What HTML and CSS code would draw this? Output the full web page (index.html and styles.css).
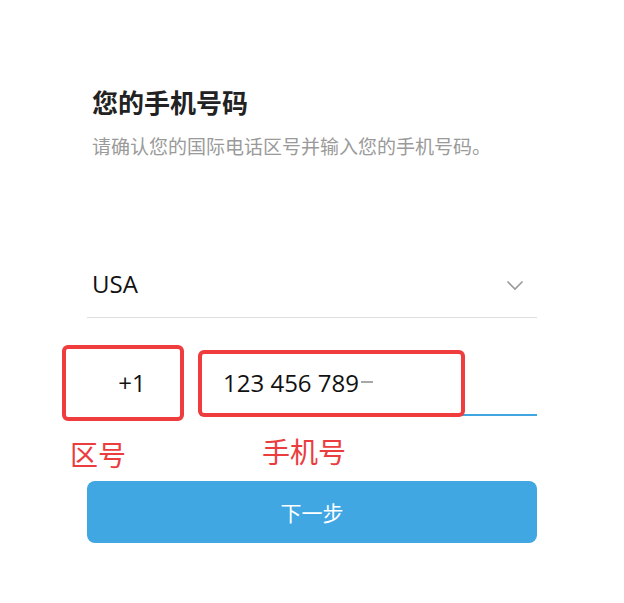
FILE: index.html
```html
<!DOCTYPE html>
<html lang="zh-CN">
<head>
<meta charset="utf-8">
<title>您的手机号码</title>
<link rel="stylesheet" href="styles.css">
</head>
<body>
<div class="page">
  <div class="form">
    <h1 class="title">您的手机号码</h1>
    <p class="subtitle">请确认您的国际电话区号并输入您的手机号码。</p>
    <div class="select-row">
      <span class="country">USA</span>
      <svg class="chevron" width="18" height="11" viewBox="0 0 18 11"><path d="M1.5 1.5 L9 9 L16.5 1.5" fill="none" stroke="#9b9b9b" stroke-width="1.6"/></svg>
    </div>
    <div class="phone-row">
      <div class="code-input">+1</div>
      <div class="number-input">123 456 789<span class="caret"></span></div>
    </div>
    <button class="next-btn">下一步</button>
  </div>
  <div class="mark mark-code"></div>
  <div class="mark mark-number"></div>
  <div class="label label-code">区号</div>
  <div class="label label-number">手机号</div>
</div>
</body>
</html>
```
FILE: styles.css
```css
html, body {
  margin: 0;
  padding: 0;
  background: #fff;
}
.page {
  position: relative;
  width: 624px;
  height: 603px;
  font-family: "Open Sans", "Noto Sans CJK SC", sans-serif;
}
.form {
  width: 450px;
  margin-left: 87px;
  padding-top: 87px;
}
.title {
  margin: 0;
  padding-left: 5px;
  font-family: "Noto Sans CJK SC", sans-serif;
  font-size: 26px;
  line-height: 30px;
  font-weight: 700;
  color: #222;
}
.subtitle {
  margin: 17px 0 0;
  padding-left: 5px;
  font-family: "Noto Sans CJK SC", sans-serif;
  font-size: 19px;
  line-height: 24px;
  color: #9a9a9a;
}
.select-row {
  margin-top: 109px;
  display: flex;
  align-items: center;
  justify-content: space-between;
  padding: 0 13px 16px 5px;
  border-bottom: 1px solid #dedede;
}
.country {
  font-size: 24px;
  line-height: 34px;
  color: #111;
}
.chevron {
  display: block;
  margin-top: 2px;
}
.phone-row {
  margin-top: 48px;
  display: flex;
  gap: 23px;
}
.code-input {
  width: 90px;
  text-align: center;
  font-size: 24px;
  line-height: 34px;
  padding-bottom: 16px;
  color: #111;
}
.number-input {
  flex: 1;
  font-size: 24px;
  line-height: 34px;
  padding: 0 0 14px 23px;
  border-bottom: 2px solid #40a5e0;
  color: #111;
}
.caret {
  display: inline-block;
  width: 12px;
  height: 2px;
  margin-left: 2px;
  background: #a8a8a8;
  vertical-align: 9px;
}
.next-btn {
  display: block;
  width: 450px;
  height: 62px;
  margin-top: 65px;
  border: none;
  border-radius: 8px;
  background: #40a7e3;
  color: #fff;
  font-family: "Noto Sans CJK SC", sans-serif;
  font-size: 21px;
  font-weight: 400;
  padding: 0;
}
.mark {
  position: absolute;
  border: 4px solid #ef3c3c;
  border-radius: 6px;
  box-sizing: border-box;
}
.mark-code {
  left: 62px;
  top: 345px;
  width: 122px;
  height: 76px;
}
.mark-number {
  left: 198px;
  top: 350px;
  width: 267px;
  height: 67px;
}
.label {
  position: absolute;
  font-family: "Noto Sans CJK SC", sans-serif;
  font-size: 28px;
  line-height: 32px;
  color: #ea3d3d;
}
.label-code {
  left: 70px;
  top: 438px;
}
.label-number {
  left: 262px;
  top: 435px;
}
```
